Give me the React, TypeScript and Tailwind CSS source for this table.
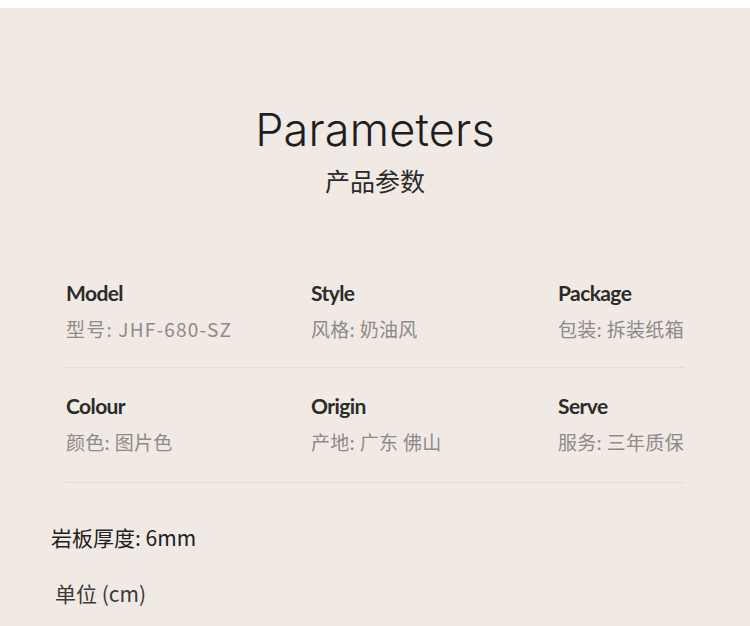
const rows = [
  [
    { en: 'Model', zh: '型号: JHF-680-SZ', wide: true },
    { en: 'Style', zh: '风格: 奶油风' },
    { en: 'Package', zh: '包装: 拆装纸箱' },
  ],
  [
    { en: 'Colour', zh: '颜色: 图片色' },
    { en: 'Origin', zh: '产地: 广东 佛山' },
    { en: 'Serve', zh: '服务: 三年质保' },
  ],
]

const cjk = "font-['Noto_Sans_CJK_SC','Noto_Sans',sans-serif]"

export default function App() {
  return (
    <div className="w-[750px] h-[626px] bg-white pt-[8px] overflow-hidden">
      <div className="h-full bg-[#f0e9e4]">
        {/* heading */}
        <div className="flex flex-col items-center pt-[94px]">
          <h1 className="font-['Inter',sans-serif] font-light text-[45px] leading-[56px] tracking-[0.2px] text-[#1e1e1e]">
            Parameters
          </h1>
          <div className={`${cjk} text-[25px] leading-[34px] mt-[5px] text-[#2a2a2a]`}>产品参数</div>
        </div>

        {/* parameter grid */}
        <div className="pl-[66px] mt-[82px] w-[684px]">
          {rows.map((row, i) => (
            <div key={i} className="border-b border-[#e3dcd6]">
              <div className={`grid grid-cols-[245px_247px_1fr] ${i === 0 ? 'pt-0 pb-[24px]' : 'pt-[24px] pb-[26px]'}`}>
                {row.map((c) => (
                  <div key={c.en}>
                    <div className="font-['Lato',sans-serif] font-bold text-[21px] leading-[28px] tracking-[-0.6px] text-[#2b2b2b]">
                      {c.en}
                    </div>
                    <div className={`${cjk} text-[19px] leading-[28px] mt-[8px] text-[#8e8a88] ${c.wide ? 'tracking-[1.2px]' : 'tracking-[0.3px]'}`}>{c.zh}</div>
                  </div>
                ))}
              </div>
            </div>
          ))}
        </div>

        <div className={`${cjk} pl-[51px] mt-[39px] text-[21px] leading-[30px] text-[#1e1e1e]`}>岩板厚度: 6mm</div>
        <div className={`${cjk} pl-[55px] mt-[26px] text-[21px] leading-[30px] text-[#3a3a3a]`}>单位 (cm)</div>
      </div>
    </div>
  )
}
